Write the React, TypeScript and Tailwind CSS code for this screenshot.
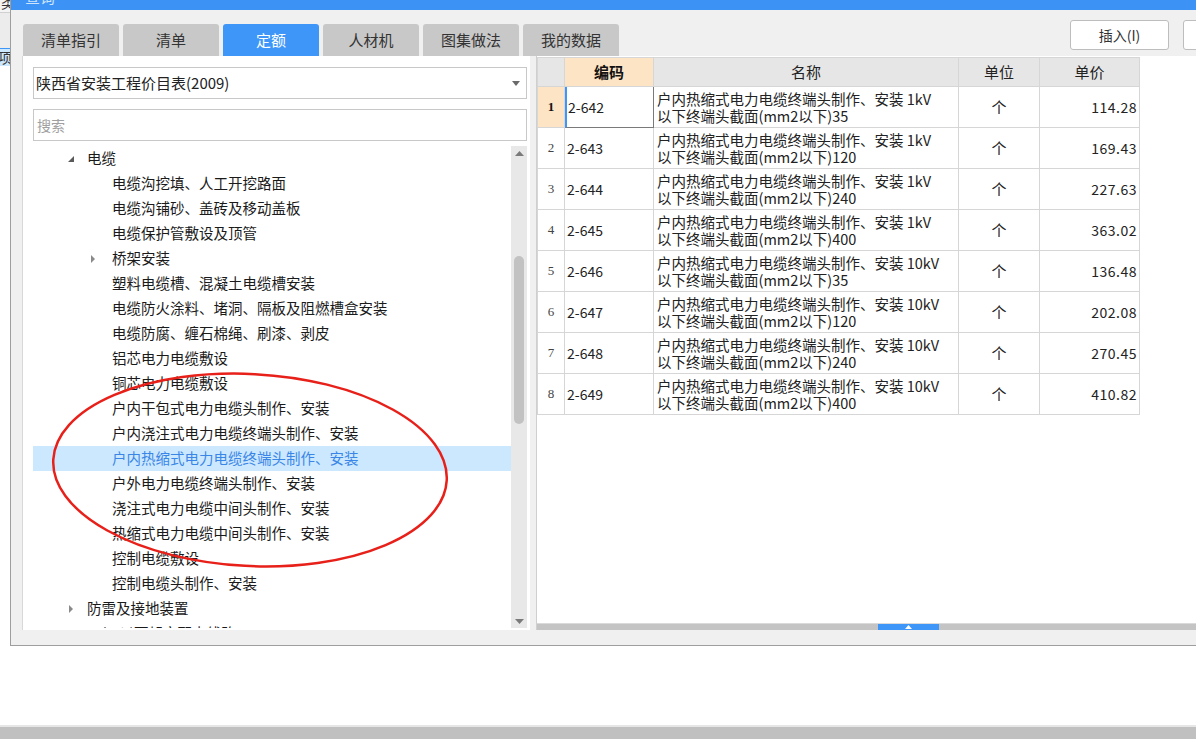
import React from 'react';

const tabs = ['清单指引', '清单', '定额', '人材机', '图集做法', '我的数据'];

type TreeItem = { text: string; level: number; arrow?: 'open' | 'closed'; selected?: boolean };

const treeItems: TreeItem[] = [
  { text: '电缆', level: 1, arrow: 'open' },
  { text: '电缆沟挖填、人工开挖路面', level: 2 },
  { text: '电缆沟铺砂、盖砖及移动盖板', level: 2 },
  { text: '电缆保护管敷设及顶管', level: 2 },
  { text: '桥架安装', level: 2, arrow: 'closed' },
  { text: '塑料电缆槽、混凝土电缆槽安装', level: 2 },
  { text: '电缆防火涂料、堵洞、隔板及阻燃槽盒安装', level: 2 },
  { text: '电缆防腐、缠石棉绳、刷漆、剥皮', level: 2 },
  { text: '铝芯电力电缆敷设', level: 2 },
  { text: '铜芯电力电缆敷设', level: 2 },
  { text: '户内干包式电力电缆头制作、安装', level: 2 },
  { text: '户内浇注式电力电缆终端头制作、安装', level: 2 },
  { text: '户内热缩式电力电缆终端头制作、安装', level: 2, selected: true },
  { text: '户外电力电缆终端头制作、安装', level: 2 },
  { text: '浇注式电力电缆中间头制作、安装', level: 2 },
  { text: '热缩式电力电缆中间头制作、安装', level: 2 },
  { text: '控制电缆敷设', level: 2 },
  { text: '控制电缆头制作、安装', level: 2 },
  { text: '防雷及接地装置', level: 1, arrow: 'closed' },
  { text: '10kV以下架空配电线路', level: 1, arrow: 'closed' },
];

const rows = [
  { code: '2-642', kv: '1kV', size: '35', price: '114.28' },
  { code: '2-643', kv: '1kV', size: '120', price: '169.43' },
  { code: '2-644', kv: '1kV', size: '240', price: '227.63' },
  { code: '2-645', kv: '1kV', size: '400', price: '363.02' },
  { code: '2-646', kv: '10kV', size: '35', price: '136.48' },
  { code: '2-647', kv: '10kV', size: '120', price: '202.08' },
  { code: '2-648', kv: '10kV', size: '240', price: '270.45' },
  { code: '2-649', kv: '10kV', size: '400', price: '410.82' },
];

const Arrow = ({ dir }: { dir: 'open' | 'closed' }) =>
  dir === 'open' ? (
    <svg width="8" height="8" viewBox="0 0 8 8" className="shrink-0">
      <path d="M7 1 L7 7 L1 7 Z" fill="#5a5a5a" />
    </svg>
  ) : (
    <svg width="8" height="10" viewBox="0 0 8 10" className="shrink-0">
      <path d="M2 1 L6 5 L2 9 Z" fill="#8a8a8a" />
    </svg>
  );

const TreeRow = ({ item }: { item: TreeItem }) => {
  const pad = item.level === 1 ? 'pl-[32px]' : 'pl-[54px]';
  const box = item.level === 1 ? 'w-[22px]' : 'w-[25px]';
  return (
    <div
      className={`h-[25px] flex items-center shrink-0 ${pad} ${
        item.selected ? 'bg-[#cce8ff] text-[#3a86e6]' : 'text-[#1a1a1a]'
      }`}
    >
      <div className={`${box} flex justify-start pl-[2px]`}>{item.arrow && <Arrow dir={item.arrow} />}</div>
      <span className="text-[14.5px] whitespace-nowrap leading-none">{item.text}</span>
    </div>
  );
};

const cell = 'border-r border-b border-[#d6d6d6]';

export default function App() {
  return (
    <div
      className="w-[1196px] h-[739px] overflow-hidden bg-white flex flex-col relative"
      style={{ fontFamily: '"Noto Sans CJK SC", "Noto Sans", sans-serif' }}
    >
      <div className="flex h-[646px] shrink-0">
        {/* background window strip */}
        <div className="w-[10px] shrink-0 flex flex-col overflow-hidden">
          <div className="h-[17px] bg-[#f4f4f4] text-[14px] leading-none text-[#333] -mt-[5px] pl-[1px] whitespace-nowrap">类别</div>
          <div className="h-[36px] bg-[#ececec] border-t border-[#d0d0d0]" />
          <div className="h-[18px] bg-[#cce8ff] border-t border-[#3d96f8] text-[14px] leading-[17px] text-[#333] whitespace-nowrap -ml-[2px]">项目</div>
          <div className="flex-1 bg-white" />
        </div>

        {/* dialog */}
        <div className="flex-1 min-w-0 border-l border-b border-[#9e9e9e] flex flex-col bg-[#f0f0f0] overflow-hidden">
          <div className="h-[10px] bg-[#3c93f5] shrink-0 overflow-hidden pl-[14px]">
            <div className="text-[15px] leading-none text-[#cfe4fd] -mt-[11px]">查询</div>
          </div>

          <div className="h-[46px] shrink-0 flex items-end pl-[12px]">
            {tabs.map((t) => (
              <div
                key={t}
                className={`w-[96px] h-[32px] mr-[4px] shrink-0 rounded-t-[3px] flex items-center justify-center text-[15px] ${
                  t === '定额' ? 'bg-[#3d96f8] text-white' : 'bg-[#c8c8c8] text-[#333]'
                }`}
              >
                {t}
              </div>
            ))}
            <div className="ml-[447px] self-start mt-[10px] w-[99px] h-[30px] shrink-0 bg-white border border-[#bdbdbd] rounded-[3px] flex items-center justify-center text-[14px] text-[#333]">
              插入(I)
            </div>
            <div className="ml-[14px] self-start mt-[10px] w-[99px] h-[30px] shrink-0 bg-white border border-[#bdbdbd] rounded-[3px]" />
          </div>

          <div className="h-[574px] shrink-0 flex pl-[11px] gap-[6px]">
            {/* left panel */}
            <div className="w-[508px] shrink-0 bg-white border-l border-[#d8d8d8] flex flex-col pl-[10px] pr-[3px] pt-[11px]">
              <div className="h-[32px] border border-[#c8c8c8] flex items-center pl-[2px] pr-[6px] shrink-0">
                <span className="flex-1 text-[15px] text-[#222]">陕西省安装工程价目表(2009)</span>
                <svg width="8" height="5" viewBox="0 0 8 5">
                  <path d="M0 0 L8 0 L4 5 Z" fill="#6a6a6a" />
                </svg>
              </div>
              <div className="h-[32px] mt-[10px] border border-[#c8c8c8] flex items-center pl-[3px] shrink-0">
                <span className="text-[14px] text-[#a0a0a0]">搜索</span>
              </div>
              <div className="flex-1 mt-[5px] flex min-h-0 mb-[2px]">
                <div className="flex-1 flex flex-col overflow-hidden">
                  {treeItems.map((it) => (
                    <TreeRow key={it.text} item={it} />
                  ))}
                </div>
                <div className="w-[16px] shrink-0 bg-[#e8e8e8] flex flex-col items-center pt-[5px] pb-[4px]">
                  <svg width="9" height="5" viewBox="0 0 9 5">
                    <path d="M0 5 L9 5 L4.5 0 Z" fill="#7a7a7a" />
                  </svg>
                  <div className="w-[10px] h-[168px] mt-[100px] rounded-full bg-[#c2c2c2]" />
                  <div className="flex-1" />
                  <svg width="9" height="5" viewBox="0 0 9 5">
                    <path d="M0 0 L9 0 L4.5 5 Z" fill="#7a7a7a" />
                  </svg>
                </div>
              </div>
            </div>

            {/* right panel */}
            <div className="flex-1 min-w-0 bg-white border-l border-[#cfcfcf] flex flex-col">
              <div className="flex-1 pt-[1px]">
                <div className="grid grid-cols-[27px_89px_305px_81px_100px] w-fit border-t border-l border-[#d6d6d6] text-[#222]">
                  <div className={`${cell} h-[29px] bg-[#e6e6e6]`} />
                  <div className={`${cell} h-[29px] bg-[#fde4c4] flex items-center justify-center text-[15px] font-bold text-[#111]`}>编码</div>
                  <div className={`${cell} h-[29px] bg-[#e6e6e6] flex items-center justify-center text-[15px]`}>名称</div>
                  <div className={`${cell} h-[29px] bg-[#e6e6e6] flex items-center justify-center text-[15px]`}>单位</div>
                  <div className={`${cell} h-[29px] bg-[#e6e6e6] flex items-center justify-center text-[15px]`}>单价</div>
                  {rows.map((r, i) => (
                    <React.Fragment key={r.code}>
                      <div
                        className={`${cell} h-[41px] flex items-center justify-center text-[13px] ${
                          i === 0 ? 'bg-[#fde4c4] font-bold text-[#111]' : 'text-[#444]'
                        }`}
                        style={{ fontFamily: '"Liberation Serif", serif' }}
                      >
                        {i + 1}
                      </div>
                      <div
                        className={`h-[41px] flex items-center text-[14px] ${
                          i === 0
                            ? 'border-l-2 border-l-[#3d96f8] border-r border-b border-[#7a7a7a] pl-[1px]'
                            : `${cell} pl-[2px]`
                        }`}
                      >
                        {r.code}
                      </div>
                      <div className={`${cell} h-[41px] flex flex-col justify-center pl-[3px] text-[14.5px] leading-[17px] whitespace-nowrap`}>
                        <span>户内热缩式电力电缆终端头制作、安装 {r.kv}</span>
                        <span>以下终端头截面(mm2以下){r.size}</span>
                      </div>
                      <div className={`${cell} h-[41px] flex items-center justify-center text-[15px]`}>个</div>
                      <div className={`${cell} h-[41px] flex items-center justify-end pr-[2px] text-[14px] tracking-[0.5px]`}>{r.price}</div>
                    </React.Fragment>
                  ))}
                </div>
              </div>
              <div className="h-[7px] shrink-0 bg-[#c4c4c4] border-t border-[#dadada] flex justify-start">
                <div className="ml-[341px] w-[61px] h-full bg-[#3d96f8] flex items-center justify-center">
                  <svg width="7" height="4" viewBox="0 0 7 4">
                    <path d="M0 4 L7 4 L3.5 0 Z" fill="#ffffff" />
                  </svg>
                </div>
              </div>
            </div>
          </div>
          <div className="flex-1" />
        </div>
      </div>

      <div className="flex-1" />
      <div className="h-[2px] bg-[#e6e6e6] shrink-0" />
      <div className="h-[12px] bg-[#c0c0c0] shrink-0" />

      {/* red annotation ellipse */}
      <svg className="absolute left-0 top-0 pointer-events-none" width="1196" height="739">
        <ellipse cx="250" cy="470" rx="197" ry="96" transform="rotate(3 250 470)" fill="none" stroke="#e8201a" strokeWidth="2.5" />
      </svg>
    </div>
  );
}
